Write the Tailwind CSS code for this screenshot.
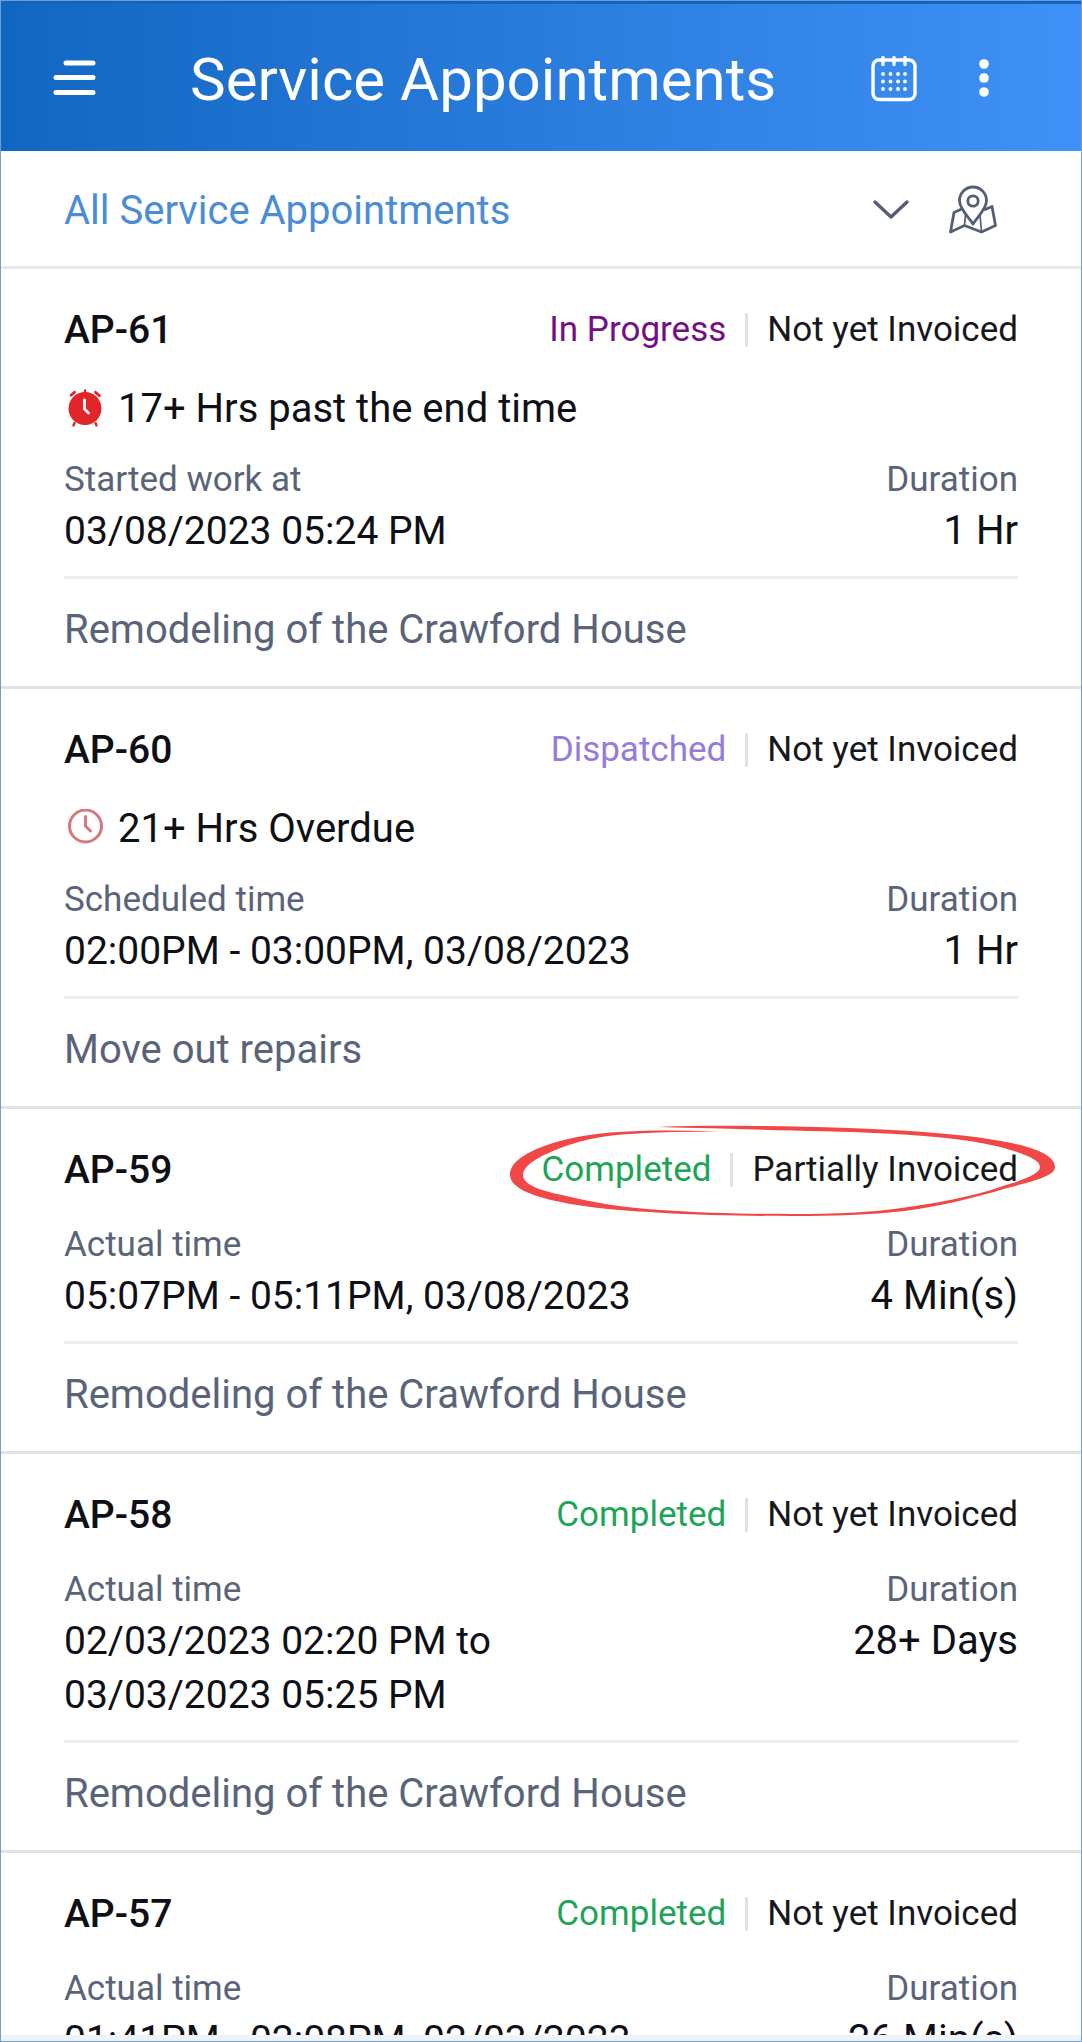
<!DOCTYPE html>
<html lang="en">
<head>
    <meta charset="UTF-8">
    <meta name="viewport" content="width=device-width, initial-scale=1.0">
    <title>Service Appointments</title>
    <script src="https://cdn.jsdelivr.net/npm/@tailwindcss/browser@4"></script>
</head>
<body class="bg-white text-[#0f1016] font-[Roboto,sans-serif]">
    <div class="h-screen flex flex-col border border-[#6c9fd3] overflow-hidden">

        <!-- App bar -->
        <header class="shrink-0 h-[150px] flex items-center pl-[51px] pr-[73px] border-t-3 border-[#1264bf] bg-linear-to-r from-[#1067c2] to-[#3f91f7] text-white">
            <button type="button" aria-label="Menu" class="shrink-0">
                <svg class="w-[46px] h-[46px]" viewBox="0 0 46 46" fill="none" stroke="currentColor" stroke-width="5" stroke-linecap="round">
                    <path d="M14 8h27M4 22.500h37M4 37.500h37"/>
                </svg>
            </button>
            <h1 class="flex-1 pt-1 pl-[92px] text-[60px] leading-[72px] whitespace-nowrap">Service Appointments</h1>
            <button type="button" aria-label="Calendar" class="shrink-0">
                <svg class="w-12 h-12" viewBox="0 0 48 48" fill="none" stroke="currentColor" stroke-width="3.400" stroke-linecap="round">
                    <rect x="3" y="6" width="42" height="39.500" rx="6"/>
                    <path d="M13 3.500v7M24 3.500v7M35 3.500v7"/>
                    <g fill="currentColor" stroke="none">
                        <circle cx="13" cy="20" r="1.900"/><circle cx="20.500" cy="20" r="1.900"/><circle cx="28" cy="20" r="1.900"/><circle cx="35" cy="20" r="1.900"/>
                        <circle cx="13" cy="27.500" r="1.900"/><circle cx="20.500" cy="27.500" r="1.900"/><circle cx="28" cy="27.500" r="1.900"/><circle cx="35" cy="27.500" r="1.900"/>
                        <circle cx="13" cy="35" r="1.900"/><circle cx="20.500" cy="35" r="1.900"/><circle cx="28" cy="35" r="1.900"/><circle cx="35" cy="35" r="1.900"/>
                    </g>
                </svg>
            </button>
            <button type="button" aria-label="More options" class="shrink-0 ml-[42px]">
                <svg class="w-12 h-12" viewBox="0 0 48 48" fill="currentColor">
                    <circle cx="24" cy="10" r="4.800"/><circle cx="24" cy="24" r="4.800"/><circle cx="24" cy="38" r="4.800"/>
                </svg>
            </button>
        </header>

        <!-- View picker -->
        <div class="shrink-0 flex items-center h-[118px] pl-14 pr-[82px] border-b-3 border-[#e8e9eb] text-[#555e73]">
            <label for="view" class="sr-only">View</label>
            <div class="relative flex-1">
                <select id="view" class="w-full appearance-none bg-transparent pt-1 pl-[7px] text-[40px] leading-[54px] text-[#4a8cd8]">
                    <option>All Service Appointments</option>
                </select>
                <svg class="absolute right-0 top-2.5 w-10 h-10 pointer-events-none" viewBox="0 0 40 40" fill="none" stroke="currentColor" stroke-width="3.400" stroke-linecap="round" stroke-linejoin="round">
                    <path d="M4 12l16 15 16-15"/>
                </svg>
            </div>
            <button type="button" aria-label="Map view" class="shrink-0 ml-9">
                <svg class="w-[52px] h-[52px]" viewBox="0 0 52 52" fill="none" stroke="currentColor" stroke-width="2.800" stroke-linejoin="round" stroke-linecap="round">
                    <path d="M26 41c-4-7-13.500-14.500-13.500-23.500a13.500 13.500 0 0 1 27 0C39.500 26.500 30 34 26 41z"/>
                    <circle cx="26" cy="18" r="5.200"/>
                    <path d="M14.500 26L7 29.500 3.500 49l14-6.500 17 6.500 14-6.500L45 23.500l-7 3"/>
                    <path stroke-width="1.700" d="M18.500 31.500l-1 11M33 32l1.500 17"/>
                </svg>
            </button>
        </div>

        <!-- Appointment list -->
        <main class="flex-1 min-h-0 overflow-hidden text-[40px] leading-[54px]">
            <article class="px-[63px] pt-[35px] border-b-3 border-[#dde3e7]">
                <div class="flex items-center justify-between leading-[52px] mb-[26px]">
                    <h2 class="text-[39px] font-medium">AP-61</h2>
                    <div class="flex items-center text-[35px]">
                        <span class="text-[#750e86]">In Progress</span>
                        <span class="w-[3px] h-[34px] mx-[19px] bg-[#dde3e7]"></span>
                        <span class="text-[#17181c]">Not yet Invoiced</span>
                    </div>
                </div>
                <div class="flex items-center mb-5">
                    <svg class="w-10 h-10 mr-[14px]" viewBox="0 0 40 40" fill="none" stroke="#e12528" stroke-width="2.400" stroke-linecap="round">
                        <circle cx="21" cy="19.500" r="16.500" fill="#e12528" stroke="none"/>
                        <path d="M21 1.500v3M10.500 34l-1 2.500M31.500 34l1 2.500"/>
                        <path stroke-width="2.800" d="M7 6.200l3.500-3M31.500 3.200l4 3.500"/>
                        <path stroke="#fff" stroke-width="2.800" stroke-linejoin="round" d="M20.500 11v9l4 4"/>
                    </svg>
                    <p>17+ Hrs past the end time</p>
                </div>
                <dl class="flex justify-between pb-[18px] border-b-3 border-[#ebeff2]">
                    <div>
                        <dt class="text-[35px] leading-[48px] text-[#5a6479]">Started work at</dt>
                        <dd class="text-[39px]">03/08/2023 05:24 PM</dd>
                    </div>
                    <div class="text-right">
                        <dt class="text-[35px] leading-[48px] text-[#5a6479]">Duration</dt>
                        <dd>1 Hr</dd>
                    </div>
                </dl>
                <p class="pt-6 pb-[29px] text-[#5a6479]">Remodeling of the Crawford House</p>
            </article>

            <article class="px-[63px] pt-[35px] border-b-3 border-[#dde3e7]">
                <div class="flex items-center justify-between leading-[52px] mb-[26px]">
                    <h2 class="text-[39px] font-medium">AP-60</h2>
                    <div class="flex items-center text-[35px]">
                        <span class="text-[#967bdc]">Dispatched</span>
                        <span class="w-[3px] h-[34px] mx-[19px] bg-[#dde3e7]"></span>
                        <span class="text-[#17181c]">Not yet Invoiced</span>
                    </div>
                </div>
                <div class="flex items-center mb-5">
                    <svg class="w-10 h-10 mr-[14px]" viewBox="0 0 40 40" fill="none" stroke="#d6797d" stroke-width="3" stroke-linecap="round" stroke-linejoin="round">
                        <circle cx="21.500" cy="17" r="16"/>
                        <path d="M21.500 7.500v9.500l5 5"/>
                    </svg>
                    <p>21+ Hrs Overdue</p>
                </div>
                <dl class="flex justify-between pb-[18px] border-b-3 border-[#ebeff2]">
                    <div>
                        <dt class="text-[35px] leading-[48px] text-[#5a6479]">Scheduled time</dt>
                        <dd class="text-[39px]">02:00PM - 03:00PM, 03/08/2023</dd>
                    </div>
                    <div class="text-right">
                        <dt class="text-[35px] leading-[48px] text-[#5a6479]">Duration</dt>
                        <dd>1 Hr</dd>
                    </div>
                </dl>
                <p class="pt-6 pb-[29px] text-[#5a6479]">Move out repairs</p>
            </article>

            <article class="px-[63px] pt-[35px] border-b-3 border-[#dde3e7]">
                <div class="flex items-center justify-between leading-[52px] mb-[25px]">
                    <h2 class="text-[39px] font-medium">AP-59</h2>
                    <div class="relative flex items-center text-[35px]">
                        <span class="text-[#1da557]">Completed</span>
                        <span class="w-[3px] h-[34px] mx-[19px] bg-[#dde3e7]"></span>
                        <span class="text-[#17181c]">Partially Invoiced</span>
                        <!-- Hand-drawn ring round the status -->
                        <svg class="absolute -right-[42px] -top-6 w-[560px] h-[100px] max-w-none pointer-events-none" viewBox="0 0 560 100" fill="#f24747">
                            <path d="M158 7C190 5.500 225 5.800 254 6C315 6.500 375 8.500 424 12C505 18 555 29 555 47C555 56 534 61 507 68C475 78 440 86 405 91C370 95 335 96 292 96C245 96 200 95 160 92.700C120 90.500 92 88 65.500 83C35 77 10 69 10 54.500C10 44 22 35 39 28C62 18.500 90 13.500 122 11.700C155 9.800 188 10.500 220 11.500C188 11.600 155 12 122 14.500C95 17 75 22 58 29C40 36 23 45 23 55C23 65 42 71 62 75C90 82 125 88 160 90C205 93 245 94 292 94C335 94 370 92.500 405 87.500C440 82.500 475 76 500 67C523 60 540 54 540 47C540 39 522 33 500 27C480 22 455 18.500 424 16C380 12.500 335 11.500 292 10.500C250 9.500 205 8 158 7Z"/>
                        </svg>
                    </div>
                </div>
                <dl class="flex justify-between pb-[18px] border-b-3 border-[#ebeff2]">
                    <div>
                        <dt class="text-[35px] leading-[48px] text-[#5a6479]">Actual time</dt>
                        <dd class="text-[39px]">05:07PM - 05:11PM, 03/08/2023</dd>
                    </div>
                    <div class="text-right">
                        <dt class="text-[35px] leading-[48px] text-[#5a6479]">Duration</dt>
                        <dd>4 Min(s)</dd>
                    </div>
                </dl>
                <p class="pt-6 pb-[29px] text-[#5a6479]">Remodeling of the Crawford House</p>
            </article>

            <article class="px-[63px] pt-[35px] border-b-3 border-[#dde3e7]">
                <div class="flex items-center justify-between leading-[52px] mb-[25px]">
                    <h2 class="text-[39px] font-medium">AP-58</h2>
                    <div class="flex items-center text-[35px]">
                        <span class="text-[#1da557]">Completed</span>
                        <span class="w-[3px] h-[34px] mx-[19px] bg-[#dde3e7]"></span>
                        <span class="text-[#17181c]">Not yet Invoiced</span>
                    </div>
                </div>
                <dl class="flex justify-between pb-[18px] border-b-3 border-[#ebeff2]">
                    <div>
                        <dt class="text-[35px] leading-[48px] text-[#5a6479]">Actual time</dt>
                        <dd class="text-[39px]">02/03/2023 02:20 PM to<br>03/03/2023 05:25 PM</dd>
                    </div>
                    <div class="text-right">
                        <dt class="text-[35px] leading-[48px] text-[#5a6479]">Duration</dt>
                        <dd>28+ Days</dd>
                    </div>
                </dl>
                <p class="pt-6 pb-[29px] text-[#5a6479]">Remodeling of the Crawford House</p>
            </article>

            <article class="px-[63px] pt-[35px]">
                <div class="flex items-center justify-between leading-[52px] mb-[25px]">
                    <h2 class="text-[39px] font-medium">AP-57</h2>
                    <div class="flex items-center text-[35px]">
                        <span class="text-[#1da557]">Completed</span>
                        <span class="w-[3px] h-[34px] mx-[19px] bg-[#dde3e7]"></span>
                        <span class="text-[#17181c]">Not yet Invoiced</span>
                    </div>
                </div>
                <dl class="flex justify-between">
                    <div>
                        <dt class="text-[35px] leading-[48px] text-[#5a6479]">Actual time</dt>
                        <dd class="text-[39px]">01:41PM - 02:08PM, 02/03/2023</dd>
                    </div>
                    <div class="text-right">
                        <dt class="text-[35px] leading-[48px] text-[#5a6479]">Duration</dt>
                        <dd>26 Min(s)</dd>
                    </div>
                </dl>
            </article>
        </main>
        <footer class="shrink-0 h-1.5 bg-[#eff2f6]"></footer>
    </div>
</body>
</html>
